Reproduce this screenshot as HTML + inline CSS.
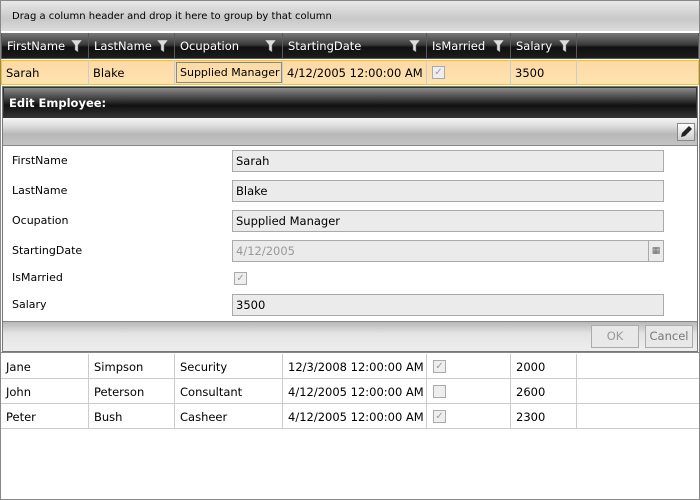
<!DOCTYPE html>
<html><head><style>
*{margin:0;padding:0;box-sizing:border-box}
body{width:700px;height:500px;background:#fff;font-family:"DejaVu Sans","Liberation Sans",sans-serif;font-size:11px;color:#000;position:relative;overflow:hidden}
.a{position:absolute;white-space:nowrap}
.outer{left:0;top:0;width:700px;height:500px;border:1px solid #888}
.grp{left:1px;top:1px;width:698px;height:31px;background:linear-gradient(#e8e8e8,#c8c8c8 60%,#dcdcdc);border-bottom:1px solid #fff;font-size:10px;line-height:31px;padding-left:11px}
.hdr{left:1px;top:33px;width:698px;height:26px;background:linear-gradient(#7a7a7a,#3a3a3a 45%,#111 55%,#1c1c1c);}
.hc{top:33px;height:26px;border:1px solid #5a5a5a;border-top:none;color:#fff;font-size:11.5px;line-height:27px;padding-left:5px}
.fil{position:absolute;right:6px;top:7px;width:11px;height:12px}
.sel{left:1px;top:60px;width:698px;height:25px;background:linear-gradient(#fdd9a6,#fee3b0);border:1px solid #f5c518}
.c{height:25px;line-height:26px;font-size:11.5px;padding-left:5px;border-right:1px solid #ccc}
.edit{left:2px;top:86px;width:696px;height:266px;border:1px solid #777;background:#fff}
.title{left:3px;top:87px;width:694px;height:31px;border:1px solid #333;background:linear-gradient(#8a8a8a,#3a3a3a 40%,#111 60%,#333);color:#fff;font-weight:bold;font-size:11.5px;line-height:30px;padding-left:5px}
.tb{left:3px;top:118px;width:694px;height:28px;background:linear-gradient(#f4f4f4,#dcdcdc 30%,#b8b8b8 60%,#c4c4c4);border-bottom:1px solid #888}
.lbl{left:12px;font-size:11px}
.inp{left:232px;width:432px;height:22px;border:1px solid #aaa;background:#ebebeb;font-size:11.5px;line-height:20px;padding-left:3px}
.cb{width:13px;height:13px;border:1px solid #aaa;background:#eee;font-size:10px;line-height:11px;text-align:center;color:#999}
.ft{left:3px;top:321px;width:694px;height:30px;background:linear-gradient(#b8b8b8,#e4e4e4 40%,#eee);border-top:1px solid #888}
.btn{top:325px;height:23px;border:1px solid #aaa;background:#e8e8e8;color:#999;font-size:11.5px;line-height:21px;text-align:center}
.row{left:1px;width:698px;height:25px;border-bottom:1px solid #ccc}
</style></head><body>
<div class="a outer"></div>
<div class="a grp">Drag a column header and drop it here to group by that column</div>
<div class="a hdr"></div>
<div class="a hc" style="left:1px;width:88px">FirstName<svg class="fil" viewBox="0 0 11 12"><path d="M0 0H11L7 5V12L4 10V5Z" fill="#ddd" stroke="#666" stroke-width=".5"/></svg></div>
<div class="a hc" style="left:88px;width:87px">LastName<svg class="fil" viewBox="0 0 11 12"><path d="M0 0H11L7 5V12L4 10V5Z" fill="#ddd" stroke="#666" stroke-width=".5"/></svg></div>
<div class="a hc" style="left:174px;width:109px">Ocupation<svg class="fil" viewBox="0 0 11 12"><path d="M0 0H11L7 5V12L4 10V5Z" fill="#ddd" stroke="#666" stroke-width=".5"/></svg></div>
<div class="a hc" style="left:282px;width:145px">StartingDate<svg class="fil" viewBox="0 0 11 12"><path d="M0 0H11L7 5V12L4 10V5Z" fill="#ddd" stroke="#666" stroke-width=".5"/></svg></div>
<div class="a hc" style="left:426px;width:85px">IsMarried<svg class="fil" viewBox="0 0 11 12"><path d="M0 0H11L7 5V12L4 10V5Z" fill="#ddd" stroke="#666" stroke-width=".5"/></svg></div>
<div class="a hc" style="left:510px;width:67px">Salary<svg class="fil" viewBox="0 0 11 12"><path d="M0 0H11L7 5V12L4 10V5Z" fill="#ddd" stroke="#666" stroke-width=".5"/></svg></div>
<div class="a hc" style="left:576px;width:123px"></div>

<div class="a sel"></div>
<div class="a c" style="left:1px;top:60px;width:88px">Sarah</div>
<div class="a c" style="left:88px;top:60px;width:87px">Blake</div>
<div class="a c" style="left:174px;top:60px;width:109px;"><div class="a" style="left:2px;top:2px;width:106px;height:21px;border:1px solid #888;line-height:19px;padding-left:3px;overflow:hidden;font-size:11px">Supplied Manager</div></div>
<div class="a c" style="left:282px;top:60px;width:145px">4/12/2005 12:00:00 AM</div>
<div class="a c" style="left:426px;top:60px;width:85px"><div class="a cb" style="left:6px;top:6px">✓</div></div>
<div class="a c" style="left:510px;top:60px;width:67px">3500</div>

<div class="a edit"></div>
<div class="a title">Edit Employee:</div>
<div class="a tb"></div>
<div class="a" style="left:677px;top:123px;width:18px;height:18px;border:1px solid #888;background:linear-gradient(#fff,#ccc)"><svg width="16" height="16" viewBox="0 0 16 16"><path d="M3 13L4 9L11 2L14 5L7 12Z" fill="#222"/></svg></div>

<div class="a lbl" style="top:154px">FirstName</div>
<div class="a inp" style="top:150px">Sarah</div>
<div class="a lbl" style="top:184px">LastName</div>
<div class="a inp" style="top:180px">Blake</div>
<div class="a lbl" style="top:214px">Ocupation</div>
<div class="a inp" style="top:210px">Supplied Manager</div>
<div class="a lbl" style="top:244px">StartingDate</div>
<div class="a inp" style="top:240px;color:#999">4/12/2005<div class="a" style="right:0;top:0;width:15px;height:20px;border-left:1px solid #aaa;font-size:9px;line-height:20px;text-align:center;color:#666">▦</div></div>
<div class="a lbl" style="top:271px">IsMarried</div>
<div class="a cb" style="left:234px;top:272px">✓</div>
<div class="a lbl" style="top:298px">Salary</div>
<div class="a inp" style="top:294px">3500</div>

<div class="a ft"></div>
<div class="a btn" style="left:591px;width:48px">OK</div>
<div class="a btn" style="left:645px;width:48px;color:#777">Cancel</div>

<div class="a" style="left:1px;top:352px;width:698px;height:1px;background:#888"></div>
<div class="a row" style="top:354px"></div>
<div class="a row" style="top:379px"></div>
<div class="a row" style="top:404px"></div>
<div class="a" style="left:88px;top:354px;width:1px;height:75px;background:#ccc"></div>
<div class="a" style="left:174px;top:354px;width:1px;height:75px;background:#ccc"></div>
<div class="a" style="left:282px;top:354px;width:1px;height:75px;background:#ccc"></div>
<div class="a" style="left:426px;top:354px;width:1px;height:75px;background:#ccc"></div>
<div class="a" style="left:510px;top:354px;width:1px;height:75px;background:#ccc"></div>
<div class="a" style="left:576px;top:354px;width:1px;height:75px;background:#ccc"></div>

<div class="a c" style="left:1px;top:354px;border:none">Jane</div>
<div class="a c" style="left:89px;top:354px;border:none">Simpson</div>
<div class="a c" style="left:175px;top:354px;border:none">Security</div>
<div class="a c" style="left:283px;top:354px;border:none">12/3/2008 12:00:00 AM</div>
<div class="a cb" style="left:433px;top:360px">✓</div>
<div class="a c" style="left:511px;top:354px;border:none">2000</div>

<div class="a c" style="left:1px;top:379px;border:none">John</div>
<div class="a c" style="left:89px;top:379px;border:none">Peterson</div>
<div class="a c" style="left:175px;top:379px;border:none">Consultant</div>
<div class="a c" style="left:283px;top:379px;border:none">4/12/2005 12:00:00 AM</div>
<div class="a cb" style="left:433px;top:385px"></div>
<div class="a c" style="left:511px;top:379px;border:none">2600</div>

<div class="a c" style="left:1px;top:404px;border:none">Peter</div>
<div class="a c" style="left:89px;top:404px;border:none">Bush</div>
<div class="a c" style="left:175px;top:404px;border:none">Casheer</div>
<div class="a c" style="left:283px;top:404px;border:none">4/12/2005 12:00:00 AM</div>
<div class="a cb" style="left:433px;top:410px">✓</div>
<div class="a c" style="left:511px;top:404px;border:none">2300</div>
</body></html>
